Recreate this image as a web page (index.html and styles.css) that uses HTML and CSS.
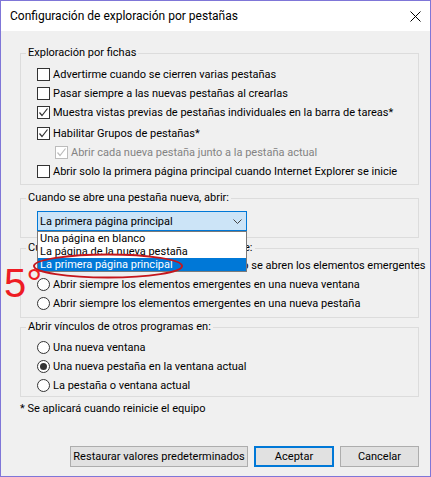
FILE: index.html
```html
<!DOCTYPE html>
<html lang="es">
<head>
  <meta charset="UTF-8" />
  <meta name="viewport" content="width=device-width, initial-scale=1.0" />
  <link rel="stylesheet" href="styles.css">
  <title>Configuración de exploración por pestañas</title>
</head>
<body>
<div class="window">
  <div class="titlebar">
    <span class="title">Configuración de exploración por pestañas</span>
    <svg class="close" width="11" height="11" viewBox="0 0 11 11">
      <path d="M0.5 0.5 L10.5 10.5 M10.5 0.5 L0.5 10.5" stroke="#000" stroke-width="1" fill="none"/>
    </svg>
  </div>

  <div class="content">
    <fieldset class="group group-tabs">
      <legend>Exploración por fichas</legend>
      <label class="row"><span class="box"></span>Advertirme cuando se cierren varias pestañas</label>
      <label class="row"><span class="box"></span>Pasar siempre a las nuevas pestañas al crearlas</label>
      <label class="row"><span class="box checked"><svg width="11" height="11" viewBox="0 0 11 11"><path d="M1.5 5.5 L4 8.5 L9.5 1.5" stroke="#333" stroke-width="1.2" fill="none"/></svg></span>Muestra vistas previas de pestañas individuales en la barra de tareas*</label>
      <label class="row row-gap"><span class="box checked"><svg width="11" height="11" viewBox="0 0 11 11"><path d="M1.5 5.5 L4 8.5 L9.5 1.5" stroke="#333" stroke-width="1.2" fill="none"/></svg></span>Habilitar Grupos de pestañas*</label>
      <label class="row sub disabled"><span class="box checked"><svg width="11" height="11" viewBox="0 0 11 11"><path d="M1.5 5.5 L4 8.5 L9.5 1.5" stroke="#bcbcbc" stroke-width="1.2" fill="none"/></svg></span>Abrir cada nueva pestaña junto a la pestaña actual</label>
      <label class="row"><span class="box"></span>Abrir solo la primera página principal cuando Internet Explorer se inicie</label>
    </fieldset>

    <fieldset class="group group-new">
      <legend>Cuando se abre una pestaña nueva, abrir:</legend>
      <div class="combo-wrap">
        <div class="combo">
          <span>La primera página principal</span>
          <svg width="9" height="5" viewBox="0 0 9 5"><path d="M0.5 0.5 L4.5 4.5 L8.5 0.5" stroke="#444" stroke-width="1" fill="none"/></svg>
        </div>
        <ul class="dropdown">
          <li>Una página en blanco</li>
          <li>La página de la nueva pestaña</li>
          <li class="selected">La primera página principal</li>
        </ul>
      </div>
    </fieldset>

    <fieldset class="group group-popups">
      <legend>Cuando se encuentre un elemento emergente:</legend>
      <label class="row"><span class="radio"></span>Dejar que Internet Explorer decida cómo se abren los elementos emergentes</label>
      <label class="row"><span class="radio"></span>Abrir siempre los elementos emergentes en una nueva ventana</label>
      <label class="row"><span class="radio"></span>Abrir siempre los elementos emergentes en una nueva pestaña</label>
    </fieldset>

    <fieldset class="group group-links">
      <legend>Abrir vínculos de otros programas en:</legend>
      <label class="row"><span class="radio"></span>Una nueva ventana</label>
      <label class="row"><span class="radio checked"></span>Una nueva pestaña en la ventana actual</label>
      <label class="row"><span class="radio"></span>La pestaña o ventana actual</label>
    </fieldset>

    <p class="note">* Se aplicará cuando reinicie el equipo</p>

    <div class="buttons">
      <button class="btn btn-restore">Restaurar valores predeterminados</button>
      <button class="btn btn-default">Aceptar</button>
      <button class="btn btn-cancel">Cancelar</button>
    </div>
  </div>

  <!-- annotation drawn over the dialog -->
  <svg class="mark" width="156" height="30" viewBox="0 0 156 30">
    <ellipse cx="77" cy="14" rx="74" ry="11.5" stroke="#c4161c" stroke-width="2" fill="none"/>
  </svg>
  <span class="step">5°</span>
</div>
</body>
</html>
```

FILE: styles.css
```css
/* Page */
body {
  margin: 0;
  font-family: Roboto, "Segoe UI", sans-serif;
  font-size: 11px;
  color: #000;
}

/* Dialog window */
.window {
  position: relative;
  width: 431px;
  height: 477px;
  box-sizing: border-box;
  border: 1px solid #7f76d8;
  background-color: #f0f0f0;
  display: flex;
  flex-direction: column;
}

.titlebar {
  height: 30px;
  background-color: #fff;
  display: flex;
  align-items: center;
  justify-content: space-between;
  padding: 0 9px 0 9px;
}

.title {
  font-size: 12px;
}

.content {
  display: flex;
  flex-direction: column;
  padding: 14px 11px 0 19px;
}

/* Group boxes */
.group {
  margin: 0;
  padding: 0 0 3px 16px;
  border: 1px solid #dcdcdc;
  min-width: 0;
}

.group legend {
  padding: 0 2px;
  margin-left: -11px;
  line-height: 16px;
}

.group-tabs {
  padding-top: 4px;
}

.group-new {
  margin-top: 5px;
  padding-top: 5px;
  padding-bottom: 6px;
}

.group-popups {
  margin-top: 2px;
  padding-bottom: 4px;
}

.group-links {
  margin-top: 1px;
  padding-top: 3px;
  padding-bottom: 1px;
}

.row {
  display: flex;
  align-items: center;
  gap: 3px;
  height: 19px;
  white-space: nowrap;
}

.row-gap {
  margin-top: 2px;
}

.row.sub {
  margin-left: 18px;
}

.row.disabled {
  color: #838383;
}

/* Checkboxes and radios */
.box {
  width: 13px;
  height: 13px;
  box-sizing: border-box;
  border: 1px solid #333;
  background-color: #fff;
  display: flex;
  align-items: center;
  justify-content: center;
  flex: none;
}

.disabled .box {
  border-color: #bcbcbc;
}

.radio {
  width: 13px;
  height: 13px;
  box-sizing: border-box;
  border: 1px solid #333;
  border-radius: 50%;
  background-color: #fff;
  display: flex;
  align-items: center;
  justify-content: center;
  flex: none;
}

.radio.checked::after {
  content: "";
  width: 7px;
  height: 7px;
  border-radius: 50%;
  background-color: #333;
}

/* Combo box */
.combo-wrap {
  position: relative;
  width: 210px;
}

.combo {
  height: 20px;
  box-sizing: border-box;
  border: 1px solid #0078d7;
  background-color: #cce4f7;
  display: flex;
  align-items: center;
  justify-content: space-between;
  padding: 0 4px 0 2px;
}

.dropdown {
  position: absolute;
  top: 100%;
  left: 0;
  width: 100%;
  box-sizing: border-box;
  margin: 0;
  padding: 0;
  list-style: none;
  background-color: #fff;
  border: 1px solid #7a7a7a;
  z-index: 2;
}

.dropdown li {
  height: 13px;
  line-height: 13px;
  padding-left: 2px;
  white-space: nowrap;
}

.dropdown li.selected {
  background-color: #0078d7;
  color: #fff;
}

/* Footer */
.note {
  margin: 4px 0 0;
  line-height: 16px;
}

.buttons {
  display: flex;
  justify-content: flex-end;
  gap: 6px;
  margin-top: 29px;
}

.btn {
  height: 21px;
  box-sizing: border-box;
  border: 1px solid #adadad;
  background-color: #e1e1e1;
  font-family: inherit;
  font-size: 11px;
  color: #000;
  padding: 0;
  white-space: nowrap;
}

.btn-restore {
  width: 178px;
}

.btn-default {
  width: 80px;
  border: 2px solid #0078d7;
}

.btn-cancel {
  width: 79px;
}

/* Red annotation on top */
.mark {
  position: absolute;
  left: 30px;
  top: 251px;
  z-index: 3;
}

.step {
  position: absolute;
  left: 3px;
  top: 262px;
  font-family: "Liberation Sans", Arial, sans-serif;
  font-size: 40px;
  line-height: 1;
  color: #ee1c24;
  z-index: 3;
}
```
